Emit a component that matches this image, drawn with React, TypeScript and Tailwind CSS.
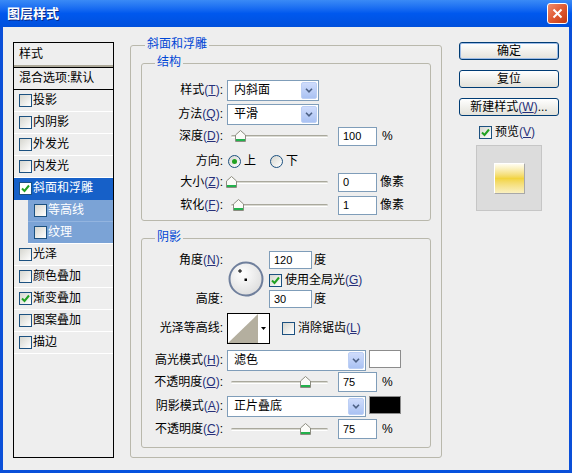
import React from 'react';

function Mn({ k }: { k: string }) {
  return (
    <span className="text-[#26307a]">
      (<span className="underline underline-offset-1">{k}</span>)
    </span>
  );
}

function CheckBox({ checked = false, light = false }: { checked?: boolean; light?: boolean }) {
  return (
    <span
      className={`w-[13px] h-[13px] shrink-0 border border-[#1c5180] flex items-center justify-center ${
        light ? 'bg-white' : 'bg-linear-to-br from-[#d6d6cf] to-white'
      }`}
    >
      {checked && (
        <svg width="9" height="9" viewBox="0 0 9 9">
          <path d="M1 4.5 L3.5 7 L8 1.5" stroke="#21a121" strokeWidth="2" fill="none" />
        </svg>
      )}
    </span>
  );
}

function Radio({ checked = false }: { checked?: boolean }) {
  return (
    <span className="w-[13px] h-[13px] shrink-0 rounded-full border border-[#1c5180] bg-linear-to-br from-[#d6d6cf] to-white flex items-center justify-center">
      {checked && <span className="w-[5px] h-[5px] rounded-full bg-[#21a121]" />}
    </span>
  );
}

function Select({ value, w }: { value: string; w: string }) {
  return (
    <div className={`${w} h-[21px] border border-[#7f9db9] bg-white flex items-center pl-[6px] pr-px`}>
      <span className="flex-1">{value}</span>
      <span className="w-[16px] h-[17px] rounded-[2px] bg-linear-to-b from-[#cfdcfb] to-[#aac2f3] border border-[#bccff5] flex items-center justify-center">
        <svg width="8" height="5" viewBox="0 0 8 5">
          <path d="M1 0.8 L4 3.8 L7 0.8" stroke="#4d6185" strokeWidth="1.6" fill="none" />
        </svg>
      </span>
    </div>
  );
}

function Slider({ pos }: { pos: number }) {
  return (
    <div className="relative w-[107px] h-[19px] shrink-0">
      <div className="absolute left-[4px] w-[97px] top-[8px] h-[3px] rounded-full border-t border-[#a9a89c] border-b border-b-white bg-[#d9d9d2]" />
      <svg className="absolute top-[3px]" style={{ left: pos - 5 }} width="11" height="12" viewBox="0 0 11 12">
        <path d="M0.5 5 L5.5 0.5 L10.5 5 L10.5 11.5 L0.5 11.5 Z" fill="#fbfbf8" stroke="#8c8c80" />
        <rect x="1" y="9" width="9" height="2" fill="#22b14c" />
      </svg>
    </div>
  );
}

function NumInput({ v, w = 'w-[39px] h-[19px]' }: { v: string; w?: string }) {
  return (
    <div className={`${w} shrink-0 border border-[#7f9db9] bg-white text-[11px] pl-[4px] flex items-center`}>{v}</div>
  );
}

function Label({ children }: { children: React.ReactNode }) {
  return <div className="w-[81px] shrink-0 text-right whitespace-nowrap">{children}</div>;
}

function Btn({ children, def = false }: { children: React.ReactNode; def?: boolean }) {
  return (
    <div
      className={`w-[100px] h-[18px] rounded-[3px] border border-[#003c74] bg-linear-to-b from-white to-[#e3e2da] flex items-center justify-center whitespace-nowrap ${
        def ? 'shadow-[inset_0_0_0_1px_#9cbbe6]' : ''
      }`}
    >
      {children}
    </div>
  );
}

function Item({ label, checked = false }: { label: string; checked?: boolean }) {
  return (
    <div className="h-[22px] flex items-center pl-[5px] border-b border-white">
      <CheckBox checked={checked} />
      <span className="ml-[1px]">{label}</span>
    </div>
  );
}

function Dial() {
  return (
    <svg width="36" height="36" viewBox="0 0 36 36" className="shrink-0">
      <defs>
        <radialGradient id="dialfill" cx="40%" cy="35%" r="70%">
          <stop offset="0%" stopColor="#ffffff" />
          <stop offset="100%" stopColor="#dcdcdc" />
        </radialGradient>
      </defs>
      <circle cx="18" cy="18" r="16.5" fill="url(#dialfill)" stroke="#6f7f9c" strokeWidth="2" />
      <path d="M10 10 H14 M12 8 V12" stroke="#000" strokeWidth="1" />
      <rect x="16.5" y="17.5" width="2.5" height="2.5" fill="#000" />
    </svg>
  );
}

export default function App() {
  return (
    <div className="w-[572px] h-[473px] flex flex-col bg-linear-to-r from-[#0a4fd8] via-[#0056e6] to-[#0a4fd8] text-[12px] text-black font-['Liberation_Sans','Noto_Sans_CJK_SC',sans-serif] leading-[15px]">
      {/* title bar */}
      <div className="h-[27px] shrink-0 flex items-center pl-[7px] pr-[4px] bg-linear-to-b from-[#3a8af6] via-[#0058ee] to-[#0050dc]">
        <span className="text-white font-bold text-[13px] [text-shadow:1px_1px_#0b2a86]">图层样式</span>
        <div className="ml-auto w-[21px] h-[21px] rounded-[3px] border border-white bg-linear-to-br from-[#ef8a6c] via-[#e05a32] to-[#c2380f] flex items-center justify-center">
          <svg width="11" height="11" viewBox="0 0 11 11">
            <path d="M1.5 1.5 L9.5 9.5 M9.5 1.5 L1.5 9.5" stroke="#fff" strokeWidth="2" />
          </svg>
        </div>
      </div>

      {/* body */}
      <div className="flex-1 mx-[3px] mb-[3px] bg-[#eeeeee] flex items-start">
        {/* styles list */}
        <div className="ml-[10px] mt-[15px] w-[101px] h-[416px] shrink-0 border border-black flex flex-col">
          <div className="h-[24px] flex items-center pl-[5px] border-b-2 border-[#aca899]">样式</div>
          <div className="h-[23px] flex items-center pl-[5px] border-t border-b border-black">混合选项:默认</div>
          <Item label="投影" />
          <Item label="内阴影" />
          <Item label="外发光" />
          <Item label="内发光" />
          <div className="h-[22px] flex items-center pl-[5px] bg-[#1660c8] text-white border-b border-[#1660c8]">
            <CheckBox checked light />
            <span className="ml-[1px]">斜面和浮雕</span>
          </div>
          <div className="pl-[14px]">
            <div className="h-[22px] flex items-center pl-[6px] bg-[#7ba3d6] text-white border-b border-[#93b4df]">
              <CheckBox />
              <span className="ml-[1px]">等高线</span>
            </div>
            <div className="h-[22px] flex items-center pl-[6px] bg-[#7ba3d6] text-white border-b border-white">
              <CheckBox />
              <span className="ml-[1px]">纹理</span>
            </div>
          </div>
          <Item label="光泽" />
          <Item label="颜色叠加" />
          <Item label="渐变叠加" checked />
          <Item label="图案叠加" />
          <Item label="描边" />
        </div>

        {/* bevel & emboss group */}
        <div className="relative ml-[16px] mt-[18px] w-[312px] h-[413px] shrink-0 border border-[#b9b8ac] rounded-[3px] flex flex-col">
          <span className="absolute left-[14px] -top-[9px] px-[2px] bg-[#eeeeee] text-[#0046d5]">斜面和浮雕</span>

          {/* structure */}
          <div className="relative ml-[10px] mt-[17px] w-[290px] h-[158px] border border-[#b9b8ac] rounded-[3px] flex flex-col">
            <span className="absolute left-[13px] -top-[9px] px-[2px] bg-[#eeeeee] text-[#0046d5]">结构</span>
            <div className="mt-[16px] h-[21px] flex items-center">
              <Label>样式<Mn k="T" />:</Label>
              <div className="ml-[4px]"><Select value="内斜面" w="w-[92px]" /></div>
            </div>
            <div className="mt-[3px] h-[21px] flex items-center">
              <Label>方法<Mn k="Q" />:</Label>
              <div className="ml-[4px]"><Select value="平滑" w="w-[92px]" /></div>
            </div>
            <div className="mt-[2px] h-[19px] flex items-center">
              <Label>深度<Mn k="D" />:</Label>
              <div className="ml-[4px]"><Slider pos={13} /></div>
              <div className="ml-[4px]"><NumInput v="100" /></div>
              <span className="ml-[5px]">%</span>
            </div>
            <div className="mt-[4px] h-[22px] flex items-center">
              <Label>方向:</Label>
              <div className="ml-[5px]"><Radio checked /></div>
              <span className="ml-[3px]">上</span>
              <div className="ml-[14px]"><Radio /></div>
              <span className="ml-[3px]">下</span>
            </div>
            <div className="mt-[1px] h-[19px] flex items-center">
              <Label>大小<Mn k="Z" />:</Label>
              <div className="ml-[4px]"><Slider pos={4} /></div>
              <div className="ml-[4px]"><NumInput v="0" /></div>
              <span className="ml-[3px]">像素</span>
            </div>
            <div className="mt-[4px] h-[19px] flex items-center">
              <Label>软化<Mn k="F" />:</Label>
              <div className="ml-[4px]"><Slider pos={11} /></div>
              <div className="ml-[4px]"><NumInput v="1" /></div>
              <span className="ml-[3px]">像素</span>
            </div>
          </div>

          {/* shading */}
          <div className="relative ml-[10px] mt-[17px] w-[290px] h-[210px] border border-[#b9b8ac] rounded-[3px] flex flex-col">
            <span className="absolute left-[13px] -top-[9px] px-[2px] bg-[#eeeeee] text-[#0046d5]">阴影</span>
            <div className="mt-[12px] h-[57px] flex">
              <div className="w-[81px] shrink-0 flex flex-col justify-between text-right">
                <div className="h-[18px] flex items-center justify-end whitespace-nowrap">角度<Mn k="N" />:</div>
                <div className="h-[18px] flex items-center justify-end">高度:</div>
              </div>
              <div className="ml-[5px] mt-[10px]"><Dial /></div>
              <div className="ml-[5px] flex flex-col">
                <div className="h-[18px] flex items-center">
                  <NumInput v="120" w="w-[43px] h-[18px]" />
                  <span className="ml-[2px]">度</span>
                </div>
                <div className="mt-[5px] h-[13px] flex items-center">
                  <CheckBox checked />
                  <span className="ml-[3px] whitespace-nowrap">使用全局光<Mn k="G" /></span>
                </div>
                <div className="mt-[3px] h-[18px] flex items-center">
                  <NumInput v="30" w="w-[43px] h-[18px]" />
                  <span className="ml-[2px]">度</span>
                </div>
              </div>
            </div>
            <div className="mt-[5px] h-[31px] flex items-center">
              <Label>光泽等高线:</Label>
              <div className="ml-[4px] w-[43px] h-[31px] border border-black bg-white flex">
                <svg width="30" height="29" viewBox="0 0 30 29">
                  <polygon points="0,29 30,0 30,29" fill="#b4af9f" />
                </svg>
                <div className="flex-1 flex items-center justify-center">
                  <svg width="5" height="3" viewBox="0 0 5 3">
                    <path d="M0 0 H5 L2.5 3 Z" fill="#000" />
                  </svg>
                </div>
              </div>
              <div className="ml-[12px]"><CheckBox /></div>
              <span className="ml-[3px] whitespace-nowrap">消除锯齿<Mn k="L" /></span>
            </div>
            <div className="mt-[6px] h-[21px] flex items-start">
              <div className="h-[21px] flex items-center"><Label>高光模式<Mn k="H" />:</Label></div>
              <div className="ml-[4px]"><Select value="滤色" w="w-[139px]" /></div>
              <div className="ml-[3px] w-[32px] h-[18px] border border-[#8c8c8c] bg-white" />
            </div>
            <div className="mt-[1px] h-[20px] flex items-center">
              <Label>不透明度<Mn k="O" />:</Label>
              <div className="ml-[4px]"><Slider pos={78} /></div>
              <div className="ml-[4px]"><NumInput v="75" w="w-[39px] h-[20px]" /></div>
              <span className="ml-[5px]">%</span>
            </div>
            <div className="mt-[4px] h-[21px] flex items-start">
              <div className="h-[21px] flex items-center"><Label>阴影模式<Mn k="A" />:</Label></div>
              <div className="ml-[4px]"><Select value="正片叠底" w="w-[139px]" /></div>
              <div className="ml-[3px] w-[32px] h-[18px] border border-[#8c8c8c] bg-black" />
            </div>
            <div className="mt-[2px] h-[20px] flex items-center">
              <Label>不透明度<Mn k="C" />:</Label>
              <div className="ml-[4px]"><Slider pos={78} /></div>
              <div className="ml-[4px]"><NumInput v="75" w="w-[39px] h-[20px]" /></div>
              <span className="ml-[5px]">%</span>
            </div>
          </div>
        </div>

        {/* buttons column */}
        <div className="ml-[17px] mt-[15px] w-[100px] shrink-0 flex flex-col">
          <Btn def>确定</Btn>
          <div className="mt-[10px]"><Btn>复位</Btn></div>
          <div className="mt-[10px]"><Btn>新建样式<Mn k="W" />...</Btn></div>
          <div className="mt-[10px] h-[13px] pl-[20px] flex items-center">
            <CheckBox checked />
            <span className="ml-[3px]">预览<Mn k="V" /></span>
          </div>
          <div className="mt-[6px] ml-[17px] w-[66px] h-[66px] bg-[#dcdcdc] border border-[#c6c6c6] flex items-center justify-center">
            <div className="w-[31px] h-[31px] border-t border-l border-white border-r border-b border-r-[#a8a8a8] border-b-[#a8a8a8] bg-linear-to-b from-[#fffdf0] via-[#f2d43e] to-[#faf0c0]" />
          </div>
        </div>
      </div>
    </div>
  );
}
